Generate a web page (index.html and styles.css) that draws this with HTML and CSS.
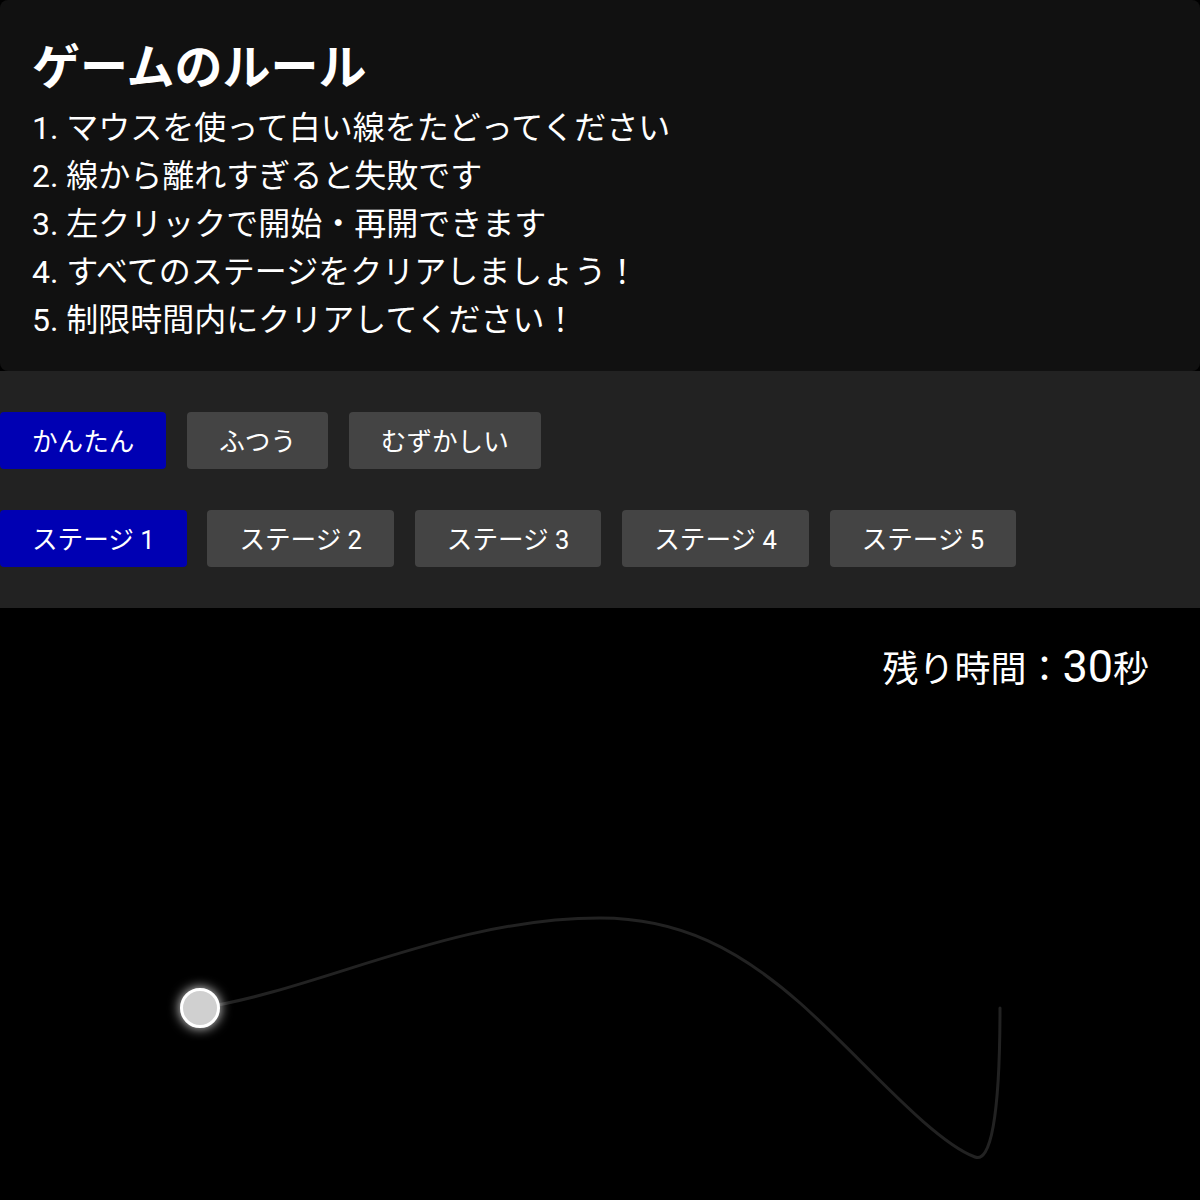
FILE: index.html
```html
<!DOCTYPE html>
<html lang="ja">
<head>
<meta charset="utf-8">
<title>ゲーム</title>
<link rel="stylesheet" href="styles.css">
</head>
<body>
  <section class="rules">
    <h1 class="rules-title">ゲームのルール</h1>
    <ol class="rules-list">
      <li>1. マウスを使って白い線をたどってください</li>
      <li>2. 線から離れすぎると失敗です</li>
      <li>3. 左クリックで開始・再開できます</li>
      <li>4. すべてのステージをクリアしましょう！</li>
      <li>5. 制限時間内にクリアしてください！</li>
    </ol>
  </section>
  <section class="controls">
    <div class="btn-row">
      <button class="btn active">かんたん</button>
      <button class="btn">ふつう</button>
      <button class="btn">むずかしい</button>
    </div>
    <div class="btn-row">
      <button class="btn active">ステージ 1</button>
      <button class="btn">ステージ 2</button>
      <button class="btn">ステージ 3</button>
      <button class="btn">ステージ 4</button>
      <button class="btn">ステージ 5</button>
    </div>
  </section>
  <section class="stage">
    <div class="timer">残り時間：<span class="timer-num">30</span>秒</div>
    <svg class="stage-canvas" width="1200" height="600" viewBox="0 0 1200 600">
      <defs>
        <filter id="glow" x="-100%" y="-100%" width="300%" height="300%">
          <feGaussianBlur stdDeviation="6" result="b"/>
          <feMerge>
            <feMergeNode in="b"/>
            <feMergeNode in="SourceGraphic"/>
          </feMerge>
        </filter>
      </defs>
      <path d="M200,400 C320,382 450,310 600,310 C680,310 740,342 800,395 C860,448 930,532 975,549 C990,555 1000,512 1000,400" fill="none" stroke="#222" stroke-width="3" stroke-linecap="round"/>
      <circle cx="200" cy="400" r="18.5" fill="#d0d0d0" stroke="#fff" stroke-width="3" filter="url(#glow)"/>
    </svg>
  </section>
</body>
</html>
```
FILE: styles.css
```css
html, body {
  margin: 0;
  padding: 0;
  background: #000;
}
body {
  font-family: Roboto, "Noto Sans CJK JP", sans-serif;
  color: #fff;
  width: 1200px;
}
.rules {
  background: #111;
  border-radius: 8px;
  padding: 40px 32px 27px;
}
.rules-title {
  margin: 0 0 8px;
  font-size: 48px;
  line-height: 56px;
  font-weight: 700;
}
.rules-list {
  list-style: none;
  margin: 0;
  padding: 0;
  font-size: 32px;
  line-height: 48px;
}
.controls {
  background: #222;
  padding: 41px 0;
  display: flex;
  flex-direction: column;
  gap: 41px;
}
.btn-row {
  display: flex;
  gap: 20.8px;
}
.btn {
  font-family: Roboto, "Noto Sans CJK JP", sans-serif;
  font-size: 25.6px;
  line-height: 37px;
  padding: 12px 32px 8px;
  border: none;
  border-radius: 4px;
  background: #444;
  color: #fff;
  margin: 0;
}
.btn.active {
  background: #0000b3;
}
.stage {
  position: relative;
  background: #000;
  height: 600px;
}
.stage-canvas {
  display: block;
}
.timer {
  position: absolute;
  top: 35px;
  right: 51px;
  font-size: 36px;
  line-height: 54px;
}
.timer-num {
  font-size: 45px;
  line-height: 1;
}
```
